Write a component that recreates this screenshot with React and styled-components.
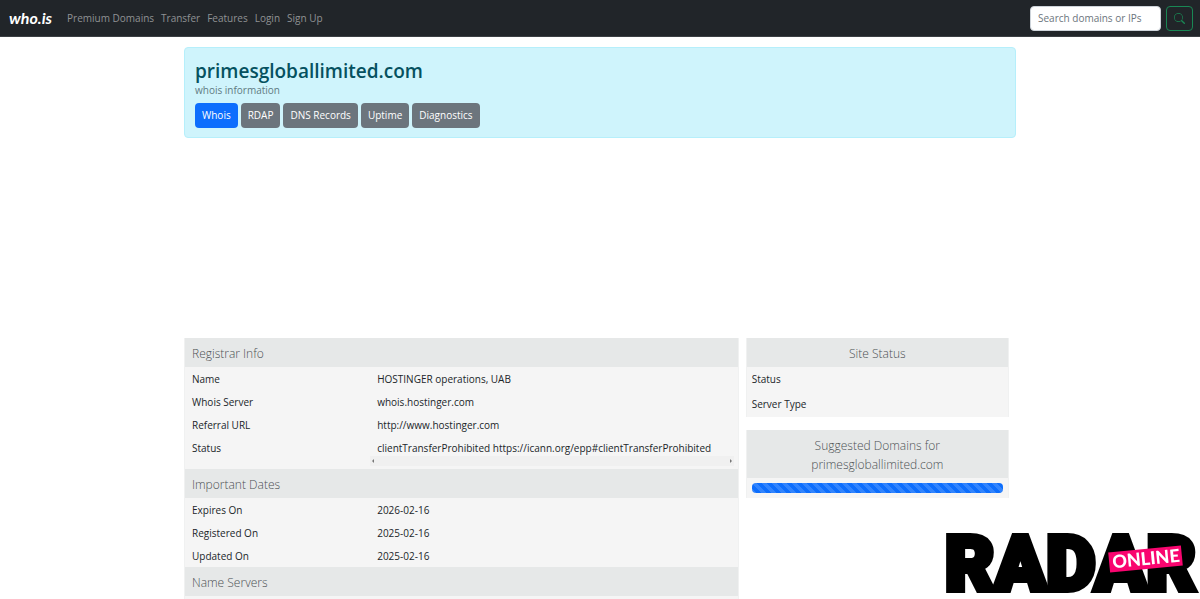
import React from "react"
import styled, { createGlobalStyle } from 'styled-components'


const GlobalStyle = createGlobalStyle`
  * {
    box-sizing: border-box;
  }
  body {
    margin: 0;
    background-color: #fff;
    color: #212529;
    font-family: "Open Sans", "Noto Sans", sans-serif;
    font-size: 10px;
    line-height: 15px;
  }
`;

const Navbar = styled.nav`
  display: flex;
  align-items: center;
  height: 37px;
  padding: 0 7px 0 9px;
  background-color: #212529;
  border-bottom: 1px solid #3b3f43;
`;

const Brand = styled.a`
  margin-right: 15px;
  color: #fff;
  font-family: Lato, sans-serif;
  font-size: 16px;
  font-weight: 700;
  font-style: italic;
  line-height: 24px;
  text-decoration: none;
`;

const NavLinks = styled.div`
  display: flex;
  flex: 1;
  gap: 7px;
`;

const NavLink = styled.a`
  color: #909294;
  text-decoration: none;
`;

const SearchForm = styled.form`
  display: flex;
  gap: 5px;
`;

const SearchInput = styled.input`
  width: 131px;
  height: 25px;
  padding: 0 7px;
  border: 1px solid #ced4da;
  border-radius: 4px;
  background-color: #fff;
  font: inherit;
  appearance: none;

  &::placeholder {
    color: #6c757d;
    opacity: 1;
  }
`;

const SearchButton = styled.button`
  display: flex;
  align-items: center;
  justify-content: center;
  width: 27px;
  height: 25px;
  padding: 0;
  border: 1px solid #198754;
  border-radius: 4px;
  background: none;
  color: #198754;
  cursor: pointer;
`;

const Container = styled.main`
  max-width: 832px;
  margin: 10px auto 0;
`;

const DomainAlert = styled.section`
  height: 91px;
  padding: 10px;
  border: 1px solid #b6effb;
  border-radius: 4px;
  background-color: #cff4fc;
`;

const Domain = styled.h1`
  margin: 0;
  color: #055160;
  font-size: 19px;
  font-weight: 600;
  line-height: 26px;
`;

const Subtitle = styled.p`
  margin: 0 0 6px;
  color: #5f7b82;
  line-height: 13px;
`;

const ButtonRow = styled.div`
  display: flex;
  gap: 3px;
`;

const TabButton = styled.button`
  height: 25px;
  padding: 0 7px;
  border: 0;
  border-radius: 4px;
  background-color: ${props => props.$active ? "#0d6efd" : "#6c757d"};
  color: #fff;
  font: inherit;
  cursor: pointer;
`;

const Columns = styled.div`
  display: grid;
  grid-template-columns: 2fr 1fr;
  align-items: start;
  margin-top: 200px;
`;

const Sidebar = styled.aside`
  display: grid;
  gap: 13px;
  padding: 0 7px;
`;

const Card = styled.section`
  border: 1px solid #f0f1f1;
  border-top: 0;
  border-bottom: 0;
  background-color: #f5f5f5;
`;

const Heading = styled.h2`
  margin: 0;
  padding: 6px 7px 4px;
  background-color: #e6e8e8;
  color: #4c5154;
  font-size: 12px;
  font-weight: 300;
  line-height: 19px;
  text-align: ${props => props.$center ? "center" : "left"};
`;

const Table = styled.table`
  width: 100%;
  table-layout: fixed;
  border-collapse: collapse;
`;

const Label = styled.th`
  width: 33.33%;
  height: ${props => props.$tall ? "25px" : "23px"};
  padding: 5px ${props => props.$tall ? "5px" : "7px"} 3px;
  font-weight: 400;
  text-align: left;
  vertical-align: top;
`;

const Value = styled.td`
  padding: 5px 4px 3px 1px;
  vertical-align: top;
`;

const ValueText = styled.div`
  padding-left: 7px;
  white-space: nowrap;
  overflow: hidden;
`;

const ScrollTrack = styled.div`
  display: flex;
  align-items: center;
  justify-content: space-between;
  height: 10px;
  padding: 0 1px;
  background-color: #f0f0f0;
`;

const ProgressWrap = styled.div`
  padding: 5px;
`;

const Progress = styled.div`
  height: 10px;
  border-radius: 4px;
  background-color: #0d6efd;
  background-image: linear-gradient(
    45deg,
    rgba(255, 255, 255, .15) 25%, transparent 25%,
    transparent 50%, rgba(255, 255, 255, .15) 50%,
    rgba(255, 255, 255, .15) 75%, transparent 75%
  );
  background-size: 10px 10px;
`;

const Watermark = styled.svg`
  position: fixed;
  right: 4px;
  bottom: 2px;
  overflow: visible;
`;


const links = ["Premium Domains", "Transfer", "Features", "Login", "Sign Up"];

const tabs = ["Whois", "RDAP", "DNS Records", "Uptime", "Diagnostics"];

const sections = [
  {
    title: "Registrar Info",
    rows: [
      ["Name", "HOSTINGER operations, UAB"],
      ["Whois Server", "whois.hostinger.com"],
      ["Referral URL", "http://www.hostinger.com"],
      ["Status", "clientTransferProhibited https://icann.org/epp#clientTransferProhibited", true],
    ],
  },
  {
    title: "Important Dates",
    rows: [
      ["Expires On", "2026-02-16"],
      ["Registered On", "2025-02-16"],
      ["Updated On", "2025-02-16"],
    ],
  },
  {
    title: "Name Servers",
    rows: [
      ["", ""],
    ],
  },
];

const SearchIcon = () => (
  <svg width="11" height="11" viewBox="0 0 16 16" fill="currentColor" aria-hidden="true">
    <path d="M11.742 10.344a6.5 6.5 0 1 0-1.397 1.398h-.001c.03.04.062.078.098.115l3.85 3.85a1 1 0 0 0 1.415-1.414l-3.85-3.85a1.007 1.007 0 0 0-.115-.1zM12 6.5a5.5 5.5 0 1 1-11 0 5.5 5.5 0 0 1 11 0z" />
  </svg>
);

const Arrow = ({ d }) => (
  <svg width="4" height="4" viewBox="0 0 4 4" fill="#777" aria-hidden="true">
    <path d={d} />
  </svg>
);

const RadarLogo = () => (
  <Watermark width="252" height="66" viewBox="0 0 252 66" role="img" aria-label="Radar Online">
    <text x="1" y="59" fill="#000" stroke="#000" strokeWidth="6" fontFamily="Roboto, sans-serif" fontWeight="900" fontSize="76">RADAR</text>
    <g transform="rotate(-5.5 202 28)">
      <rect x="165" y="18" width="73" height="20" fill="#f9056f" />
      <text x="202" y="34" fill="#fff" textAnchor="middle" fontFamily="Lato, sans-serif" fontWeight="900" fontSize="18">ONLINE</text>
    </g>
  </Watermark>
);

const App = () => {
  return (
    <>
      <GlobalStyle />
      <Navbar>
        <Brand href="#">who.is</Brand>
        <NavLinks>
          {links.map(link => <NavLink href="#" key={link}>{link}</NavLink>)}
        </NavLinks>
        <SearchForm>
          <SearchInput type="text" placeholder="Search domains or IPs" aria-label="Search domains or IPs" />
          <SearchButton type="submit" aria-label="Search">
            <SearchIcon />
          </SearchButton>
        </SearchForm>
      </Navbar>
      <Container>
        <DomainAlert>
          <Domain>primesgloballimited.com</Domain>
          <Subtitle>whois information</Subtitle>
          <ButtonRow>
            {tabs.map((tab, i) => (
              <TabButton type="button" key={tab} $active={i === 0}>{tab}</TabButton>
            ))}
          </ButtonRow>
        </DomainAlert>
        <Columns>
          <Card>
            {sections.map(section => (
              <React.Fragment key={section.title}>
                <Heading>{section.title}</Heading>
                <Table>
                  <tbody>
                    {section.rows.map(([label, value, scroll]) => (
                      <tr key={label}>
                        <Label scope="row">{label}</Label>
                        <Value>
                          <ValueText>{value}</ValueText>
                          {scroll && (
                            <ScrollTrack>
                              <Arrow d="M3 0v4L1 2z" />
                              <Arrow d="M1 0v4l2-2z" />
                            </ScrollTrack>
                          )}
                        </Value>
                      </tr>
                    ))}
                  </tbody>
                </Table>
              </React.Fragment>
            ))}
          </Card>
          <Sidebar>
            <Card>
              <Heading $center>Site Status</Heading>
              <Table>
                <tbody>
                  <tr><Label scope="row" $tall>Status</Label><Value /></tr>
                  <tr><Label scope="row" $tall>Server Type</Label><Value /></tr>
                </tbody>
              </Table>
            </Card>
            <Card>
              <Heading $center>Suggested Domains for<br />primesgloballimited.com</Heading>
              <ProgressWrap>
                <Progress role="progressbar" aria-label="Loading suggested domains" />
              </ProgressWrap>
            </Card>
          </Sidebar>
        </Columns>
      </Container>
      <RadarLogo />
    </>
  );
};

export default App;
